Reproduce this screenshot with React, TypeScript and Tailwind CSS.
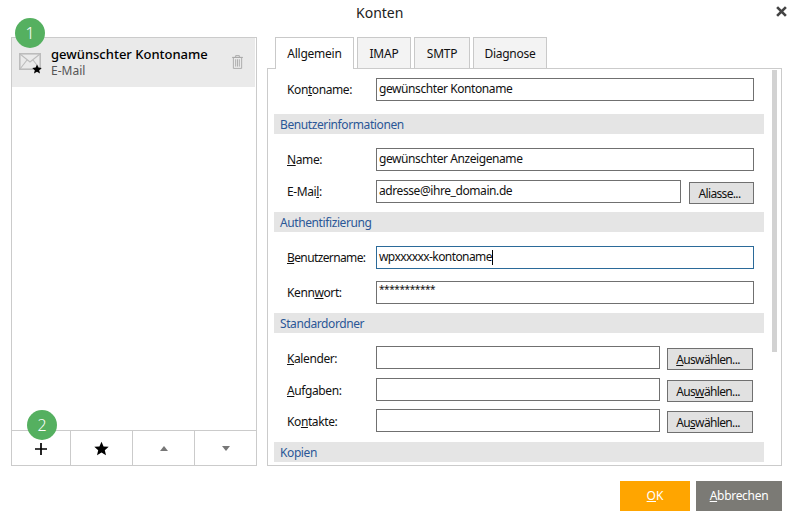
import React from "react";

const Star = ({ className }: { className: string }) => (
  <svg viewBox="0 0 24 24" className={className} fill="currentColor">
    <path d="M12 1l3.3 7.6 8.2.7-6.2 5.4 1.9 8.1L12 18.5l-7.2 4.3 1.9-8.1L.5 9.3l8.2-.7z" />
  </svg>
);

const Section = ({ title, className = "" }: { title: string; className?: string }) => (
  <div className={`w-[490px] h-[20px] bg-[#e5e5e5] pl-[6px] text-[#2b5797] tracking-[-0.4px] leading-[21px] ${className}`}>{title}</div>
);

const Label = ({ pre, u, post, className = "tracking-[-0.4px]" }: { pre?: string; u: string; post: string; className?: string }) => (
  <div className={`w-[102px] pl-[13px] shrink-0 whitespace-nowrap ${className}`}>
    {pre}
    <u>{u}</u>
    {post}
  </div>
);

const Field = ({ value, w = "w-[378px]", focus, stars, children }: { value?: string; w?: string; focus?: boolean; stars?: boolean; children?: React.ReactNode }) => (
  <div className={`${w} h-[23px] shrink-0 bg-white border ${focus ? "border-[#2b6a99]" : "border-[#707070]"} pl-[2px] whitespace-nowrap ${stars ? "text-[10px] leading-[14px] tracking-[-0.4px]" : "leading-[19px] tracking-[-0.42px]"}`}>
    {value}
    {children}
  </div>
);

const Btn = ({ children, w = "w-[86px]" }: { children: React.ReactNode; w?: string }) => (
  <button className={`${w} h-[22px] mt-[2px] pr-[4px] bg-[#e1e1e1] border border-[#707070] leading-[17px] text-[#111] tracking-[-0.65px]`}>{children}</button>
);

const Row = ({ className = "", children }: { className?: string; children: React.ReactNode }) => (
  <div className={`flex items-start h-[23px] leading-[23px] ${className}`}>{children}</div>
);

const Tab = ({ w, label, active }: { w: string; label: string; active?: boolean }) => (
  <div className={`${w} border border-[#c9c9c9] text-center tracking-[-0.25px] ${active ? "h-[32px] bg-white border-b-0 relative z-10" : "h-[31px] bg-[#f3f3f3] border-b-0"} leading-[32px]`}>{label}</div>
);

export default function App() {
  return (
    <div className="relative w-[797px] h-[519px] bg-white text-[12px] text-[#111] overflow-hidden font-['Noto_Sans','Open_Sans',sans-serif]">
      <header className="h-[37px] flex items-start pl-[356px]">
        <div className="text-[14px] leading-[26px] text-[#222]">Konten</div>
        <svg viewBox="0 0 10 10" className="ml-auto mr-[10px] mt-[6px] w-[11px] h-[11px] text-[#444]" stroke="currentColor" strokeWidth="2.4" strokeLinecap="butt">
          <path d="M1 1l8 8M9 1l-8 8" />
        </svg>
      </header>

      <main className="flex pl-[11px] gap-[10px] h-[429px]">
        {/* account list */}
        <section className="relative w-[246px] h-[429px] border border-[#cbcbcb] flex flex-col">
          <div className="h-[49px] w-[243px] mr-[1px] bg-[#eaeaea] flex items-start">
            <div className="relative ml-[7px] mt-[15px] w-[22px] h-[17px]">
              <svg viewBox="0 0 22 17" className="w-[22px] h-[17px]" fill="none" stroke="#bcbcbc" strokeWidth="1.6">
                <rect x="0.8" y="0.8" width="20.4" height="15.4" />
                <path d="M1 1l10 8 10-8M1 16l7-9M21 16l-7-9" strokeWidth="1.1" />
              </svg>
              <Star className="absolute left-[13px] top-[11px] w-[10px] h-[10px] text-black" />
            </div>
            <div className="ml-[10px] mt-[7px]">
              <div className="text-[13px] font-medium leading-[18px] text-black whitespace-nowrap">gewünschter Kontoname</div>
              <div className="leading-[15px] text-[#555]">E-Mail</div>
            </div>
            <svg viewBox="0 0 12 15" className="ml-auto mr-[12px] mt-[17px] w-[11px] h-[14px]" fill="none" stroke="#a8a8a8">
              <path d="M0 2.5h12M4 2.5V.5h4v2" />
              <path d="M1.5 2.5h9V14.5h-9z" />
              <path d="M4 4.5v8M6 4.5v8M8 4.5v8" />
            </svg>
          </div>
          <div className="flex-1" />
          <div className="h-[35px] border-t border-[#cbcbcb] flex items-center">
            <div className="w-[58px] h-full flex items-center justify-center">
              <svg viewBox="0 0 12 12" className="w-[12px] h-[12px] mt-[2px]" stroke="black" strokeWidth="1.7">
                <path d="M0 6h12M6 0v12" />
              </svg>
            </div>
            <div className="w-[62px] h-full border-l border-[#cbcbcb] flex items-center justify-center">
              <Star className="w-[15px] h-[15px] text-black" />
            </div>
            <div className="w-[62px] h-full border-l border-[#cbcbcb] flex items-center justify-center">
              <svg viewBox="0 0 8 5" className="w-[8px] h-[5px]" fill="#777"><path d="M4 0l4 5H0z" /></svg>
            </div>
            <div className="flex-1 h-full border-l border-[#cbcbcb] flex items-center justify-center">
              <svg viewBox="0 0 8 5" className="w-[8px] h-[5px]" fill="#777"><path d="M4 5l4-5H0z" /></svg>
            </div>
          </div>
        </section>

        {/* settings */}
        <section className="w-[515px] h-[429px] flex flex-col">
          <div className="flex h-[31px] pl-[8px] items-start">
            <Tab w="w-[79px]" label="Allgemein" active />
            <div className="w-[3px]" />
            <Tab w="w-[54px]" label="IMAP" />
            <div className="w-[3px]" />
            <Tab w="w-[56px]" label="SMTP" />
            <div className="w-[3px]" />
            <Tab w="w-[74px]" label="Diagnose" />
          </div>
          <div className="relative h-[398px] border border-[#cbcbcb] pl-[6px] pt-[9px]">
            <Row>
              <Label pre="Kon" u="t" post="oname:" />
              <Field value="gewünschter Kontoname" />
            </Row>
            <Section title="Benutzerinformationen" className="mt-[13px]" />
            <Row className="mt-[14px]">
              <Label u="N" post="ame:" />
              <Field value="gewünschter Anzeigename" />
            </Row>
            <Row className="mt-[9px]">
              <Label pre="E-Mai" u="l" post=":" />
              <Field value="adresse@ihre_domain.de" w="w-[305px]" />
              <div className="ml-[8px]"><Btn w="w-[65px]">Aliasse...</Btn></div>
            </Row>
            <Section title="Authentifizierung" className="mt-[9px]" />
            <Row className="mt-[14px]">
              <Label u="B" post="enutzername:" className="tracking-[-0.62px]" />
              <Field focus>
                <span className="tracking-[-0.58px]">wpxxxxxx-kontoname</span>
                <span className="inline-block w-[1px] h-[15px] bg-black align-middle" />
              </Field>
            </Row>
            <Row className="mt-[12px]">
              <Label pre="Kenn" u="w" post="ort:" />
              <Field value="***********" stars />
            </Row>
            <Section title="Standardordner" className="mt-[9px]" />
            <Row className="mt-[13px]">
              <Label u="K" post="alender:" className="tracking-[-0.4px] leading-[25px]" />
              <Field w="w-[284px]" />
              <div className="ml-[7px]"><Btn><u>A</u>uswählen...</Btn></div>
            </Row>
            <Row className="mt-[9px]">
              <Label u="A" post="ufgaben:" className="tracking-[-0.4px] leading-[25px]" />
              <Field w="w-[284px]" />
              <div className="ml-[7px]"><Btn>Aus<u>w</u>ählen...</Btn></div>
            </Row>
            <Row className="mt-[8px]">
              <Label pre="Ko" u="n" post="takte:" className="tracking-[-0.4px] leading-[25px]" />
              <Field w="w-[284px]" />
              <div className="ml-[7px]"><Btn>Au<u>s</u>wählen...</Btn></div>
            </Row>
            <Section title="Kopien" className="mt-[10px]" />
            <div className="absolute left-[504px] top-[1px] w-[5px] h-[282px] bg-[#d2d2d2]" />
          </div>
        </section>
      </main>

      <footer className="flex justify-end gap-[6px] pr-[15px] mt-[15px]">
        <button className="w-[70px] h-[30px] bg-[#ffa500] text-white"><u>O</u>K</button>
        <button className="w-[86px] h-[30px] bg-[#7b7a75] text-white tracking-[-0.3px]"><u>A</u>bbrechen</button>
      </footer>

      <div className="absolute left-[15px] top-[18px] w-[30px] h-[30px] rounded-full bg-[#55b060] text-white text-[16px] font-light leading-[30px] text-center">1</div>
      <div className="absolute left-[27px] top-[410px] w-[30px] h-[30px] rounded-full bg-[#55b060] text-white text-[16px] font-light leading-[30px] text-center">2</div>
    </div>
  );
}
